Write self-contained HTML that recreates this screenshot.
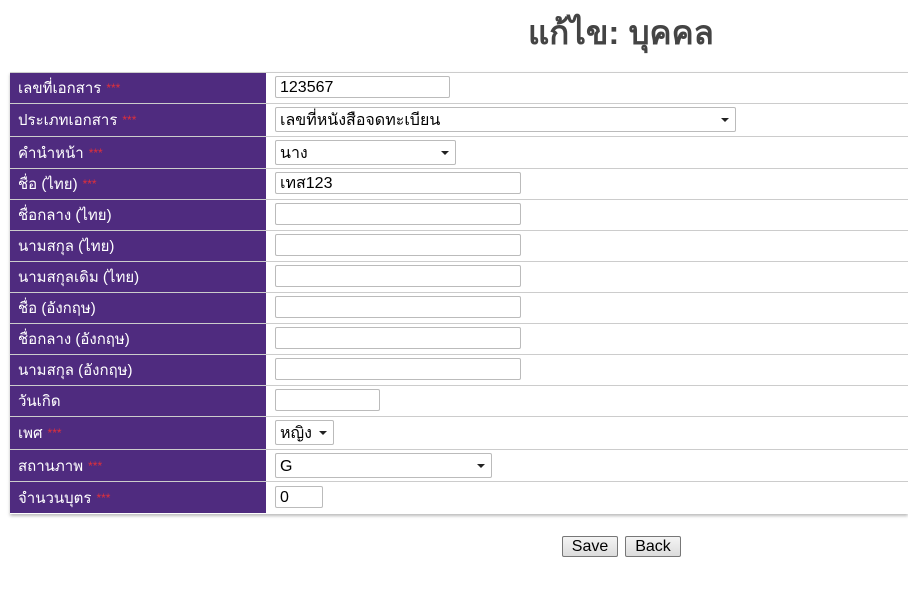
<!DOCTYPE html>
<html><head><meta charset="utf-8"><style>
body{margin:0;width:908px;height:590px;background:#fff;font-family:"Liberation Sans",Tahoma,sans-serif;position:relative;overflow:hidden}
h1{position:absolute;left:528px;top:6px;margin:0;font-size:33px;font-weight:bold;color:#444;white-space:nowrap}
.tbl{position:absolute;left:10px;top:72px;width:898px;height:441px;border-top:1px solid #ccc;box-shadow:0 2px 3px #bbb}
.r{position:absolute;left:0;width:898px;border-bottom:1px solid #ccc}
.l{position:absolute;left:0;top:0;bottom:0;width:256px;background:#4f2b7f;color:#fff;font-size:15px;padding-left:8px;box-sizing:border-box;display:flex;align-items:center}
.l span{color:#e0303a;font-size:12px;margin-left:5px}
.f{position:absolute;left:265px;height:22px;top:50%;margin-top:-12px;border:1px solid #bbb;border-radius:2px;font-size:16px;padding-left:4px;box-sizing:border-box;line-height:22px;color:#000;background:#fff}
.s{line-height:25px}
.s::after{content:"";position:absolute;right:6px;top:10px;border:4px solid transparent;border-top:4px solid #222}
.btn{position:absolute;top:536px;height:19px;border:1px solid #777;border-radius:2px;background:linear-gradient(#f4f4f4,#dcdcdc);font-size:16px;line-height:19px;text-align:center}
</style></head><body>
<h1>แก้ไข: บุคคล</h1>
<div class="tbl">
<div class="r" style="top:0;height:30px"><div class="l">เลขที่เอกสาร<span>***</span></div><div class="f" style="width:175px">123567</div></div>
<div class="r" style="top:31px;height:32px"><div class="l">ประเภทเอกสาร<span>***</span></div><div class="f s" style="width:461px;height:25px;margin-top:-13px">เลขที่หนังสือจดทะเบียน</div></div>
<div class="r" style="top:64px;height:31px"><div class="l">คำนำหน้า<span>***</span></div><div class="f s" style="width:181px;height:25px;margin-top:-13px">นาง</div></div>
<div class="r" style="top:96px;height:30px"><div class="l">ชื่อ (ไทย)<span>***</span></div><div class="f" style="width:246px">เทส123</div></div>
<div class="r" style="top:127px;height:30px"><div class="l">ชื่อกลาง (ไทย)</div><div class="f" style="width:246px"></div></div>
<div class="r" style="top:158px;height:30px"><div class="l">นามสกุล (ไทย)</div><div class="f" style="width:246px"></div></div>
<div class="r" style="top:189px;height:30px"><div class="l">นามสกุลเดิม (ไทย)</div><div class="f" style="width:246px"></div></div>
<div class="r" style="top:220px;height:30px"><div class="l">ชื่อ (อังกฤษ)</div><div class="f" style="width:246px"></div></div>
<div class="r" style="top:251px;height:30px"><div class="l">ชื่อกลาง (อังกฤษ)</div><div class="f" style="width:246px"></div></div>
<div class="r" style="top:282px;height:30px"><div class="l">นามสกุล (อังกฤษ)</div><div class="f" style="width:246px"></div></div>
<div class="r" style="top:313px;height:30px"><div class="l">วันเกิด</div><div class="f" style="width:105px"></div></div>
<div class="r" style="top:344px;height:32px"><div class="l">เพศ<span>***</span></div><div class="f s" style="width:59px;height:25px;margin-top:-13px">หญิง</div></div>
<div class="r" style="top:377px;height:31px"><div class="l">สถานภาพ<span>***</span></div><div class="f s" style="width:217px;height:25px;margin-top:-13px">G</div></div>
<div class="r" style="top:409px;height:31px;border-bottom:none"><div class="l">จำนวนบุตร<span>***</span></div><div class="f" style="width:48px">0</div></div>
</div>
<div class="btn" style="left:562px;width:54px">Save</div>
<div class="btn" style="left:625px;width:54px">Back</div>
</body></html>
